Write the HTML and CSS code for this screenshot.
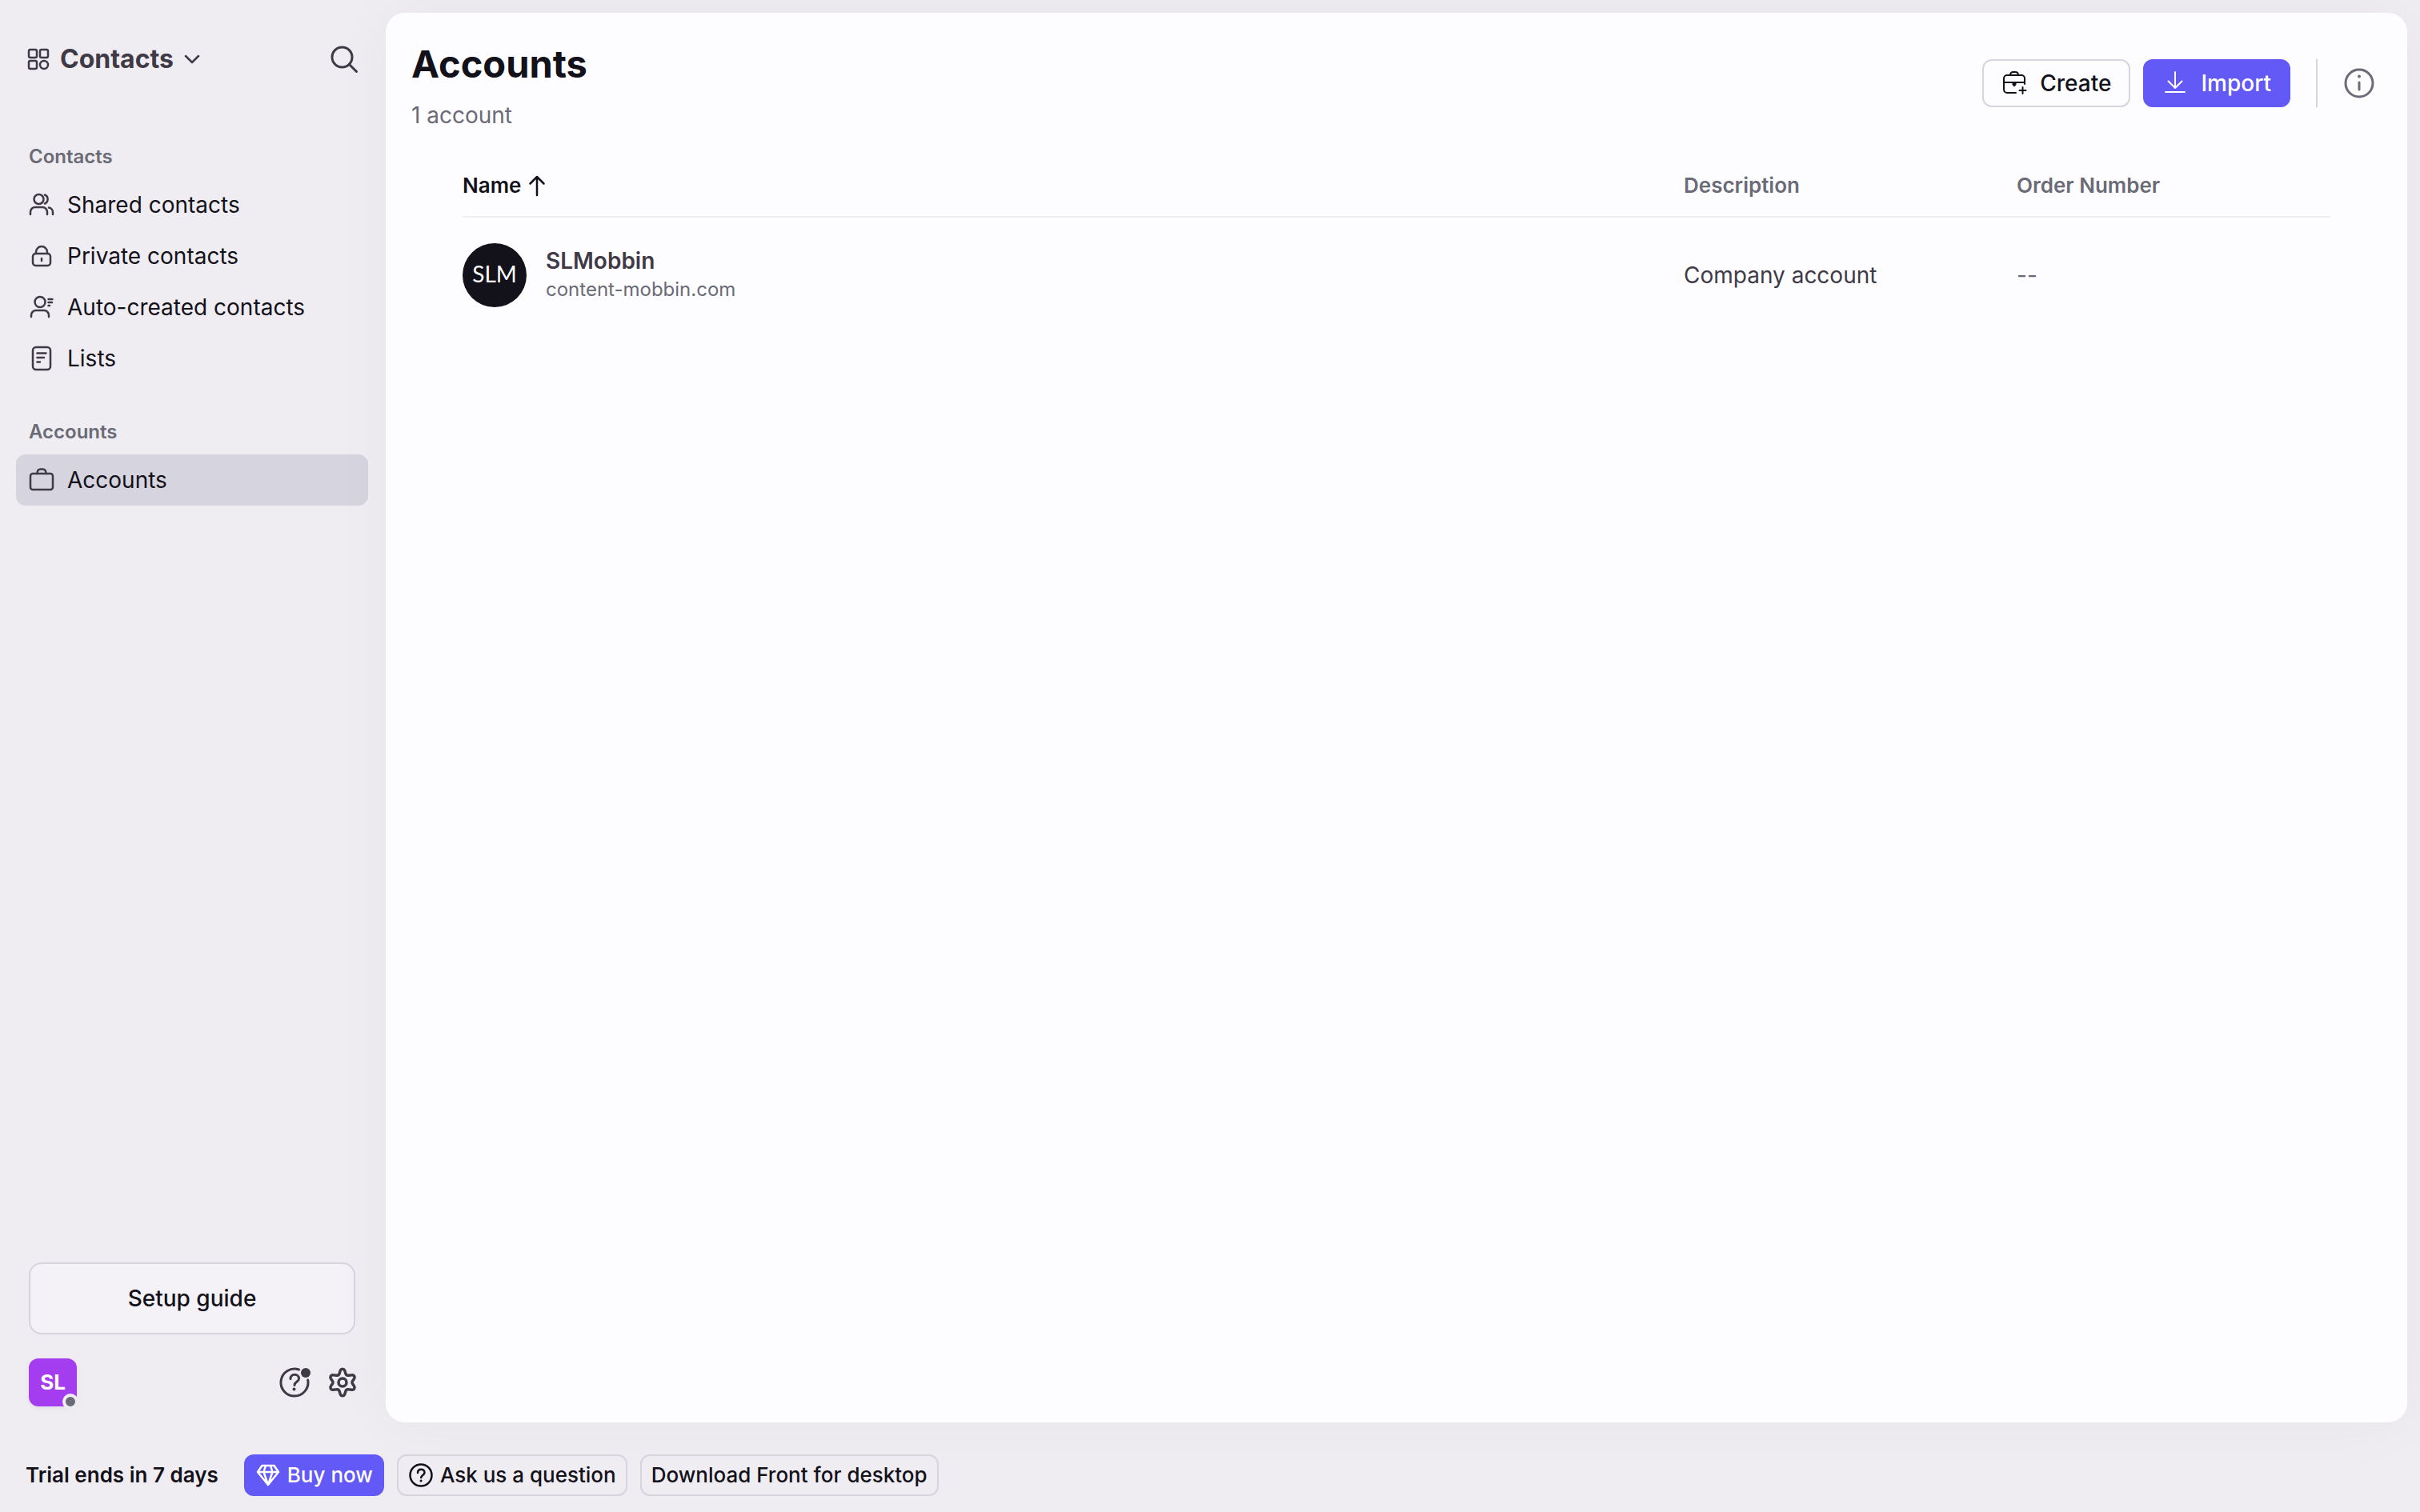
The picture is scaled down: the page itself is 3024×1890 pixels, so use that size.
FILE: index.html
```html
<!DOCTYPE html>
<html lang="en">
<head>
    <meta charset="UTF-8">
    <meta name="viewport" content="width=device-width, initial-scale=1.0">
    <title>Accounts</title>
    <link rel="stylesheet" href="styles.css">
</head>
<body>

    <div class="workspace">
        <aside class="sidebar">
            <div class="sidebar-header">
                <button type="button" class="switcher">
                    <svg class="icon" width="30" height="30" viewBox="0 0 30 30"><rect x="3" y="3" width="10" height="10" rx="2"/><rect x="17" y="3" width="10" height="10" rx="2"/><rect x="3" y="17" width="10" height="10" rx="2"/><circle cx="22" cy="22" r="5"/></svg>
                    <span>Contacts</span>
                    <svg class="icon" width="22" height="22" viewBox="0 0 22 22"><path d="M3 7l8 8 8-8"/></svg>
                </button>
                <button type="button" class="icon-button" aria-label="Search">
                    <svg class="icon" width="36" height="36" viewBox="0 0 36 36"><circle cx="15.5" cy="15.5" r="12.5"/><path d="M24.5 24.5l9 9"/></svg>
                </button>
            </div>

            <nav class="nav">
                <h2 class="nav-title">Contacts</h2>
                <a class="nav-link" href="#shared">
                    <svg class="icon" width="32" height="32" viewBox="0 0 32 32"><circle cx="12.5" cy="9" r="6"/><path d="M20 3.500a6 6 0 0 1 0 11M2 28v-3a6 6 0 0 1 6-6h9a6 6 0 0 1 6 6v3M25 19.500a6 6 0 0 1 5 6V28"/></svg>
                    Shared contacts
                </a>
                <a class="nav-link" href="#private">
                    <svg class="icon" width="32" height="32" viewBox="0 0 32 32"><rect x="5" y="13" width="22" height="15" rx="3.500"/><path d="M9 13v-2a7 7 0 0 1 14 0v2M16 19v3"/></svg>
                    Private contacts
                </a>
                <a class="nav-link" href="#auto-created">
                    <svg class="icon" width="32" height="32" viewBox="0 0 32 32"><circle cx="14" cy="9.500" r="6.500"/><path d="M3 28v-2a6 6 0 0 1 6-6h10a6 6 0 0 1 6 6v2M24.500 6h5M24.500 10h4.500M24.500 14h1.500"/></svg>
                    Auto-created contacts
                </a>
                <a class="nav-link" href="#lists">
                    <svg class="icon" width="32" height="32" viewBox="0 0 32 32"><rect x="5" y="2" width="22" height="28" rx="4"/><path d="M10.500 9.500h11M10.500 15h8.500M10.500 20.500h3.500"/></svg>
                    Lists
                </a>

                <h2 class="nav-title">Accounts</h2>
                <a class="nav-link active" href="#accounts" aria-current="page">
                    <svg class="icon" width="32" height="32" viewBox="0 0 32 32"><rect x="2" y="8" width="28" height="20" rx="3"/><path d="M10.500 8c0-3.500 1-5.500 4-5.500h3c3 0 4 2 4 5.500"/></svg>
                    Accounts
                </a>
            </nav>

            <div class="sidebar-bottom">
                <button type="button" class="setup">Setup guide</button>
                <div class="profile">
                    <button type="button" class="avatar">SL<span class="status"></span></button>
                    <div class="profile-actions">
                        <button type="button" class="icon-button" aria-label="Help">
                            <svg class="icon" width="40" height="40" viewBox="0 0 40 40"><path d="M25.500 4A17 17 0 1 0 36.700 17"/><path d="M15 15.500c0-3.200 2.200-5.200 5.200-5.200s5.300 2 5.300 4.900c0 4.200-5.500 4-5.500 8.300"/><circle class="solid" cx="19.500" cy="28.500" r="2"/><circle class="solid" cx="34" cy="8" r="6"/></svg>
                        </button>
                        <button type="button" class="icon-button heavy" aria-label="Settings">
                            <svg class="icon" width="40" height="40" viewBox="0 0 40 40"><circle cx="20" cy="20" r="5"/><path d="M17.300 5c1-2.300 4.400-2.300 5.400 0l1.300 4.200c.6 1.700 1.900 2.300 3.500 2l4.300-.4c2.600-.3 4.200 2.500 2.700 4.600l-2.100 3.100c-.7 1.100-.7 1.900 0 3l2.100 3.100c1.500 2.100-.1 4.900-2.700 4.600l-4.300-.4c-1.600-.3-2.900.3-3.500 2L22.700 35c-1 2.300-4.400 2.300-5.400 0L16 30.800c-.6-1.700-1.900-2.300-3.500-2l-4.300.4c-2.600.3-4.200-2.500-2.700-4.600l2.100-3.100c.7-1.100.7-1.900 0-3l-2.100-3.100c-1.500-2.100.1-4.900 2.700-4.600l4.300.4c1.600.3 2.900-.3 3.500-2z"/></svg>
                        </button>
                    </div>
                </div>
            </div>
        </aside>

        <main class="panel">
            <header class="panel-header">
                <div>
                    <h1>Accounts</h1>
                    <p class="count">1 account</p>
                </div>
                <div class="actions">
                    <button type="button" class="button">
                        <svg class="icon" width="32" height="32" viewBox="0 0 32 32"><path d="M18 28H7a4 4 0 0 1-4-4V10a4 4 0 0 1 4-4h18a4 4 0 0 1 4 4v7M3 15h26M11 6c0-2.500 1.500-4 4-4h2c2.500 0 4 1.500 4 4M26.500 21v8M22.500 25h8"/><path class="solid" d="M13.500 15.500h5v2.500l-2.500 2.500-2.500-2.500z"/></svg>
                        Create
                    </button>
                    <button type="button" class="button primary">
                        <svg class="icon" width="32" height="32" viewBox="0 0 32 32"><path d="M16 2v20M7.500 13.500l8.500 8.500 8.500-8.500M4 27h24"/></svg>
                        Import
                    </button>
                    <span class="divider"></span>
                    <button type="button" class="icon-button info" aria-label="Info">
                        <svg class="icon" width="40" height="40" viewBox="0 0 40 40"><circle cx="20" cy="20" r="17"/><path d="M20 19v9"/><circle class="solid" cx="20" cy="11.500" r="2"/></svg>
                    </button>
                </div>
            </header>

            <table class="accounts">
                <thead>
                    <tr>
                        <th class="sorted" aria-sort="ascending">
                            <button type="button" class="sort">
                                Name
                                <svg class="icon" width="24" height="28" viewBox="0 0 24 28"><path d="M12 26V3M3.500 11.500L12 3l8.500 8.500"/></svg>
                            </button>
                        </th>
                        <th class="col-description">Description</th>
                        <th class="col-order">Order Number</th>
                    </tr>
                </thead>
                <tbody>
                    <tr>
                        <td>
                            <a class="account" href="#slmobbin">
                                <span class="logo">SLM</span>
                                <span class="account-text">
                                    <span class="account-name">SLMobbin</span>
                                    <span class="account-domain">content-mobbin.com</span>
                                </span>
                            </a>
                        </td>
                        <td>Company account</td>
                        <td class="empty">--</td>
                    </tr>
                </tbody>
            </table>
        </main>
    </div>

    <footer class="trial-bar">
        <strong>Trial ends in 7 days</strong>
        <button type="button" class="small-button primary">
            <svg class="icon" width="32" height="32" viewBox="0 0 32 32"><path d="M8.500 4h15L29 12 16 28 3 12zM3 12h26M13 4l-2.500 8L16 28l5.500-16L19 4"/></svg>
            Buy now
        </button>
        <button type="button" class="small-button">
            <svg class="icon" width="32" height="32" viewBox="0 0 32 32"><circle cx="16" cy="16" r="13.500"/><path d="M12 13c0-2.700 1.800-4.300 4.200-4.300s4.300 1.600 4.300 4c0 3.300-4.300 3.200-4.300 6.300"/><circle class="solid" cx="16" cy="23" r="1.500"/></svg>
            Ask us a question
        </button>
        <button type="button" class="small-button">Download Front for desktop</button>
    </footer>

</body>
</html>
```
FILE: styles.css
```css
* {
    box-sizing: border-box;
}

body {
    margin: 0;
    min-height: 100vh;
    display: flex;
    flex-direction: column;
    font-family: Inter, sans-serif;
    font-size: 28px;
    line-height: 40px;
    color: #13111a;
    background-color: #efedf2;
}

h1, h2, p {
    margin: 0;
}

a {
    color: inherit;
    text-decoration: none;
}

button {
    font: inherit;
    color: inherit;
    background: none;
    border: none;
    padding: 0;
    cursor: pointer;
}

.icon {
    display: block;
    flex-shrink: 0;
    fill: none;
    stroke: currentColor;
    stroke-width: 2.5;
    stroke-linecap: round;
    stroke-linejoin: round;
}

.icon .solid {
    fill: currentColor;
    stroke: none;
}

.workspace {
    flex: 1;
    display: flex;
}

/* Sidebar */
.sidebar {
    width: 482px;
    flex-shrink: 0;
    display: flex;
    flex-direction: column;
    color: #3f3a46;
}

.sidebar-header {
    display: flex;
    justify-content: space-between;
    align-items: center;
    padding: 54px 34px 0 33px;
}

.switcher {
    display: flex;
    align-items: center;
    gap: 12px;
    font-size: 32px;
    font-weight: 700;
}

.icon-button .icon {
    stroke-width: 3;
}

.icon-button.heavy .icon {
    stroke-width: 3.5;
}

.nav {
    padding: 42px 22px 0 20px;
}

.nav-title {
    margin: 44px 0 12px 16px;
    font-size: 24px;
    line-height: 32px;
    font-weight: 600;
    color: #6a6b76;
}

.nav-link {
    display: flex;
    align-items: center;
    gap: 16px;
    height: 64px;
    padding: 0 16px;
    border-radius: 12px;
    color: #13111a;
}

.nav-link .icon {
    color: #3f3a46;
}

.nav-link.active {
    background-color: #d6d4de;
}

.sidebar-bottom {
    margin-top: auto;
    padding: 0 34px 20px 36px;
}

.setup {
    display: block;
    width: calc(100% - 4px);
    height: 90px;
    border: 2px solid #d6d4de;
    border-radius: 16px;
    font-weight: 500;
    color: #13111a;
    background-color: #f4f2f7;
}

.profile {
    display: flex;
    justify-content: space-between;
    align-items: center;
    margin-top: 30px;
}

.avatar {
    position: relative;
    width: 60px;
    height: 60px;
    border-radius: 12px;
    font-size: 26px;
    font-weight: 700;
    color: #fff;
    background-color: #a43df0;
    box-shadow: 0 2px 6px rgba(19, 17, 26, 0.06);
}

.status {
    position: absolute;
    right: -2px;
    bottom: -4px;
    width: 20px;
    height: 20px;
    border: 4px solid #efedf2;
    border-radius: 50%;
    background-color: #6a6b76;
}

.profile-actions {
    display: flex;
    gap: 20px;
}

/* Main panel */
.panel {
    flex: 1;
    margin: 16px 16px 0 0;
    padding: 34px 40px 32px 32px;
    border-radius: 24px;
    background-color: #fdfdff;
    box-shadow: 0 0 80px rgba(19, 17, 26, 0.04);
}

.panel-header {
    display: flex;
    justify-content: space-between;
    align-items: flex-start;
}

h1 {
    font-size: 47px;
    line-height: 60px;
    font-weight: 700;
}

.count {
    margin-top: 14px;
    color: #6a6b76;
}

.actions {
    display: flex;
    align-items: center;
    gap: 16px;
    margin-top: 24px;
}

.button {
    display: flex;
    align-items: center;
    gap: 16px;
    height: 60px;
    padding: 0 22px;
    border: 2px solid #d6d4de;
    border-radius: 12px;
    font-weight: 500;
}

.button .icon {
    stroke-width: 2;
}

.primary {
    border-color: #6359f6;
    color: #fff;
    background-color: #6359f6;
}

.divider {
    width: 2px;
    height: 60px;
    margin: 0 16px;
    background-color: #d6d4de;
}

.info {
    color: #6a6b76;
}

.accounts {
    width: calc(100% - 120px);
    margin: 29px 0 0 64px;
    border-collapse: collapse;
    table-layout: fixed;
    color: #3f3a46;
}

.accounts th,
.accounts td {
    padding: 0;
    text-align: left;
}

.accounts th {
    height: 78px;
    border-bottom: 2px solid #eeeef1;
    font-size: 26px;
    font-weight: 600;
    color: #6a6b76;
}

.accounts td {
    height: 144px;
}

.accounts .sorted {
    color: #13111a;
}

.accounts .empty {
    color: #6a6b76;
}

.col-description {
    width: 416px;
}

.col-order {
    width: 392px;
}

.sort {
    display: flex;
    align-items: center;
    gap: 8px;
}

.account {
    display: flex;
    align-items: center;
    gap: 24px;
}

.logo {
    display: flex;
    align-items: center;
    justify-content: center;
    width: 80px;
    height: 80px;
    padding-bottom: 4px;
    border-radius: 50%;
    font-family: Lato, sans-serif;
    font-size: 28px;
    color: #fff;
    background-color: #13111a;
}

.account-text {
    display: flex;
    flex-direction: column;
    line-height: 36px;
}

.account-name {
    font-weight: 600;
}

.account-domain {
    font-size: 24px;
    color: #6a6b76;
}

/* Trial bar */
.trial-bar {
    display: flex;
    align-items: center;
    gap: 16px;
    height: 112px;
    padding: 20px 32px 0;
    font-size: 26px;
}

.trial-bar strong {
    margin-right: 16px;
    font-weight: 600;
}

.small-button {
    display: flex;
    align-items: center;
    gap: 8px;
    height: 52px;
    padding: 0 12px;
    border: 2px solid #d6d4de;
    border-radius: 12px;
    font-weight: 500;
}

.small-button.primary {
    border-color: #6359f6;
}
```
